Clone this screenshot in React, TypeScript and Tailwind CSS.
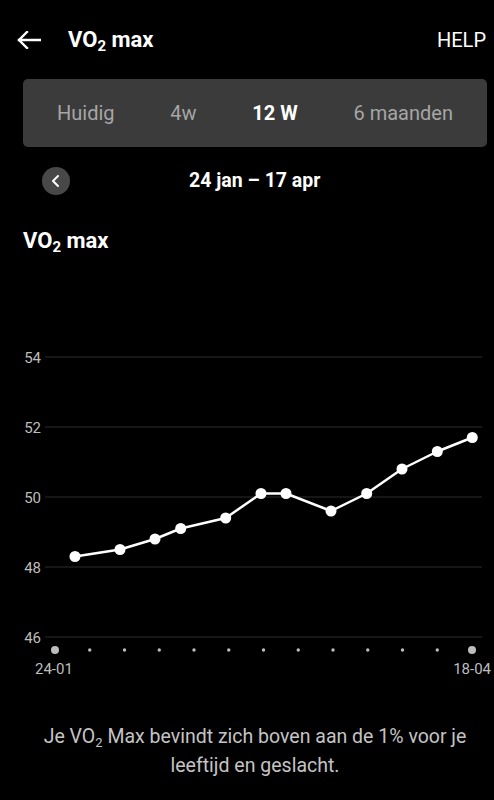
import React from "react";

const pts: [number, number][] = [
  [75, 48.3],
  [120, 48.5],
  [155, 48.8],
  [180.7, 49.1],
  [225.7, 49.4],
  [261, 50.1],
  [286, 50.1],
  [331, 49.6],
  [366.7, 50.1],
  [402, 50.8],
  [437.3, 51.3],
  [472.3, 51.7],
];

const yOf = (v: number) => 567 - (v - 48) * 35;

function Sub2({ size }: { size: string }) {
  return <span className={`${size} leading-none relative top-[0.28em]`}>2</span>;
}

function Chart() {
  const grid = [54, 52, 50, 48, 46];
  const dots: number[] = [];
  for (let i = 0; i < 13; i++) dots.push(55 + (417 / 12) * i);
  const path = pts.map((p, i) => `${i === 0 ? "M" : "L"}${p[0]} ${yOf(p[1])}`).join(" ");
  return (
    <svg width="494" height="435" viewBox="0 255 494 435" className="block">
      {grid.map((g) => (
        <g key={g}>
          <line x1="45" x2="482" y1={yOf(g)} y2={yOf(g)} stroke="#2c2c2c" strokeWidth="1" />
          <text
            x="41"
            y={yOf(g) + 5.5}
            textAnchor="end"
            fill="#bdbdbd"
            fontSize="15"
            fontFamily="Roboto, sans-serif"
          >
            {g}
          </text>
        </g>
      ))}
      <path d={path} fill="none" stroke="#ffffff" strokeWidth="2.5" strokeLinejoin="round" />
      {pts.map((p, i) => (
        <circle key={i} cx={p[0]} cy={yOf(p[1])} r="5.5" fill="#ffffff" />
      ))}
      {dots.map((x, i) => (
        <circle
          key={i}
          cx={x}
          cy="650"
          r={i === 0 || i === 12 ? 4 : 1.7}
          fill="#bdbdbd"
        />
      ))}
      <text x="35" y="674" fill="#bdbdbd" fontSize="15" fontFamily="Roboto, sans-serif">
        24-01
      </text>
      <text x="491" y="674" textAnchor="end" fill="#bdbdbd" fontSize="15" fontFamily="Roboto, sans-serif">
        18-04
      </text>
    </svg>
  );
}

export default function App() {
  return (
    <div className="w-[494px] h-[800px] bg-black text-white overflow-hidden font-['Roboto',sans-serif]">
      {/* Header */}
      <div className="h-[79px] flex items-center pl-[17px] pr-[8px]">
        <svg width="24" height="18" viewBox="0 0 24 18" className="shrink-0">
          <path
            d="M23 9 H2 M10 1 L2 9 L10 17"
            fill="none"
            stroke="#ffffff"
            strokeWidth="2.4"
            strokeLinecap="square"
            strokeLinejoin="miter"
          />
        </svg>
        <div className="ml-[27px] text-[22px] font-bold leading-[28px]">
          VO<Sub2 size="text-[15px]" /> max
        </div>
        <div className="ml-auto text-[20px] leading-[28px]">HELP</div>
      </div>

      {/* Segmented control */}
      <div className="ml-[23px] mr-[7px] h-[68px] rounded-[5px] bg-[#3b3b3b] flex items-center justify-between px-[34px] text-[20px]">
        <span className="text-[#a6a6a6]">Huidig</span>
        <span className="text-[#a6a6a6]">4w</span>
        <span className="font-bold text-white">12 W</span>
        <span className="text-[#a6a6a6]">6 maanden</span>
      </div>

      {/* Date row */}
      <div className="mt-[20px] h-[28px] flex items-center pl-[42px]">
        <div className="w-[28px] h-[28px] rounded-full bg-[#484848] flex items-center justify-center">
          <svg width="12" height="14" viewBox="0 0 12 14">
            <path d="M8 2 L3 7 L8 12" fill="none" stroke="#ffffff" strokeWidth="2" strokeLinecap="round" strokeLinejoin="round" />
          </svg>
        </div>
        <div className="ml-[119px] text-[19.5px] font-bold leading-[28px]">24 jan – 17 apr</div>
      </div>

      {/* Chart title */}
      <div className="mt-[32px] pl-[23px] text-[22px] font-bold leading-[28px]">
        VO<Sub2 size="text-[15px]" /> max
      </div>

      <Chart />

      {/* Bottom text */}
      <div className="mt-[32px] pl-[36px] pr-[20px] text-center text-[19.5px] leading-[29px] text-[#c4c4c4]">
        Je VO<Sub2 size="text-[13px]" /> Max bevindt zich boven aan de 1% voor je leeftijd en geslacht.
      </div>
    </div>
  );
}
